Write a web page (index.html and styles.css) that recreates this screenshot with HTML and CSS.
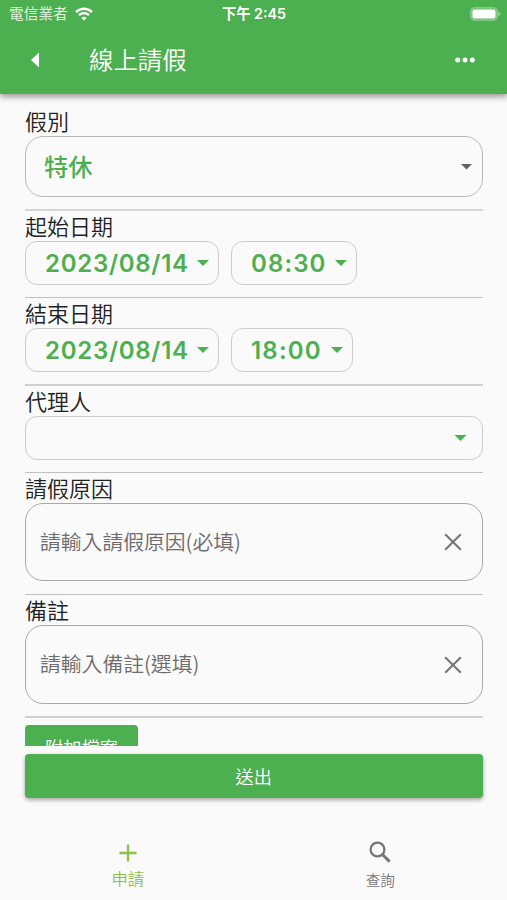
FILE: index.html
```html
<!DOCTYPE html>
<html lang="zh-Hant">
<head>
<meta charset="utf-8">
<title>線上請假</title>
<link rel="stylesheet" href="styles.css">
</head>
<body>
<div class="app">
  <header class="header">
    <div class="status">
      <div class="carrier">
        <span>電信業者</span>
        <svg width="18" height="14" viewBox="0 0 18 14" fill="none" stroke="#fff" stroke-width="2.4"><path d="M1 5.1C5.6.7 12.4.7 17 5.1"/><path d="M4 8.2c2.9-2.7 7.100-2.700 10 0"/><path d="M9 13.600L6.300 10.900c1.500-1.400 3.900-1.400 5.400 0z" fill="#fff" stroke="none"/></svg>
      </div>
      <div class="clock">下午 2:45</div>
      <svg class="battery" width="31" height="14" viewBox="0 0 31 14"><rect x=".75" y=".75" width="26.500" height="12.500" rx="4" fill="#6fc072" stroke="#94d096" stroke-width="1.200"/><rect x="2.500" y="2.500" width="23" height="9" rx="2" fill="#fff"/><path d="M28.500 4.800c2.400.7 2.400 3.700 0 4.400z" fill="#94d096"/></svg>
    </div>
    <div class="toolbar">
      <svg class="back" width="8" height="16" viewBox="0 0 8 16"><path d="M8 .5v15L0 8z" fill="#fff"/></svg>
      <h1>線上請假</h1>
      <svg class="more" width="20" height="6" viewBox="0 0 20 6" fill="#fff"><circle cx="2.700" cy="3" r="2.500"/><circle cx="10" cy="3" r="2.500"/><circle cx="17.300" cy="3" r="2.500"/></svg>
    </div>
  </header>

  <main class="form">
    <section class="field type">
      <label>假別</label>
      <div class="box large"><span class="cjk">特休</span><i class="caret dark"></i></div>
    </section>
    <section class="field">
      <label>起始日期</label>
      <div class="row">
        <div class="box date"><span>2023/08/14</span><i class="caret"></i></div>
        <div class="box start"><span>08:30</span><i class="caret"></i></div>
      </div>
    </section>
    <section class="field thick">
      <label>結束日期</label>
      <div class="row">
        <div class="box date"><span>2023/08/14</span><i class="caret"></i></div>
        <div class="box end"><span>18:00</span><i class="caret"></i></div>
      </div>
    </section>
    <section class="field">
      <label>代理人</label>
      <div class="box agent"><i class="caret"></i></div>
    </section>
    <section class="field reason">
      <label>請假原因</label>
      <div class="box input"><span>請輸入請假原因(必填)</span><svg width="18" height="18" viewBox="0 0 18 18"><path d="M1.200 1.200l15.600 15.600M16.800 1.200L1.200 16.800"/></svg></div>
    </section>
    <section class="field note">
      <label>備註</label>
      <div class="box input"><span>請輸入備註(選填)</span><svg width="18" height="18" viewBox="0 0 18 18"><path d="M1.200 1.200l15.600 15.600M16.800 1.200L1.200 16.800"/></svg></div>
    </section>
    <button class="attach">附加檔案</button>
  </main>

  <div class="actions"><button class="submit">送出</button></div>

  <nav class="tabs">
    <div class="tab active">
      <svg width="18" height="18" viewBox="0 0 18 18"><path d="M9 .5v17M.5 9h17" stroke="#8bc34a" stroke-width="2.300"/></svg>
      <span>申請</span>
    </div>
    <div class="tab">
      <svg width="22" height="22" viewBox="0 0 22 22" fill="none" stroke="#757575"><circle cx="8.500" cy="8.500" r="6.900" stroke-width="2.300"/><path d="M13.700 13.700l6.900 6.900" stroke-width="2.900"/></svg>
      <span>查詢</span>
    </div>
  </nav>
</div>
</body>
</html>
```
FILE: styles.css
```css
* { box-sizing: border-box; }

body {
  margin: 0;
  background: #fafafa;
  color: #222;
  font-family: Inter, "Noto Sans CJK TC", sans-serif;
}

svg { display: block; flex: none; }

button {
  border: 0;
  padding: 0;
  color: #fff;
  background: #4caf50;
  font: 350 18.2px/1 "Noto Sans CJK TC", sans-serif;
}

.app {
  display: flex;
  flex-direction: column;
  width: 507px;
  height: 900px;
  overflow: hidden;
}

.header {
  z-index: 1;
  flex: none;
  height: 94px;
  color: #fff;
  background: #4caf50;
  box-shadow: 0 3px 6px rgba(0, 0, 0, .38);
}

.status {
  display: grid;
  grid-template-columns: 1fr auto 1fr;
  align-items: center;
  height: 27px;
  padding: 0 8px 0 9px;
  font-size: 14.7px;
  line-height: 20px;
}

.carrier { display: flex; align-items: center; gap: 7px; color: #dff2df; }
.clock { font-size: 14.3px; font-weight: 600; white-space: nowrap; }
.battery { justify-self: end; margin-right: -2px; }

.toolbar {
  display: flex;
  align-items: center;
  height: 65px;
  padding: 0 32px 0 31px;
}

.toolbar h1 {
  margin: -2px 0 0 50px;
  font: 350 24.4px/36px "Noto Sans CJK TC", sans-serif;
}

.more { margin-left: auto; }

.form {
  flex: none;
  height: 652px;
  padding: 13px 24.5px 0 25px;
  overflow: hidden;
}

.field {
  padding-bottom: 12px;
  border-bottom: 1px solid #c0c0c0;
}

.field label {
  display: block;
  height: 30px;
  font: 350 22px/28px "Noto Sans CJK TC", sans-serif;
}

.type { border-bottom: 2px solid #d6d6d6; }
.type label { height: 29px; line-height: 27px; }
.thick, .note { border-bottom: 2px solid #d0d0d0; }
.reason { padding-bottom: 13px; }
.note .box { height: 79px; }

.row { display: flex; gap: 12px; }

.box {
  display: flex;
  align-items: center;
  justify-content: space-between;
  height: 44px;
  padding: 0 9px 0 19px;
  border: 1px solid #ccc;
  border-radius: 12px;
  color: #4caf50;
  font-size: 24px;
  font-weight: 600;
  line-height: 30px;
  white-space: nowrap;
}

.date { width: 194px; letter-spacing: .72px; }
.start { width: 126px; letter-spacing: 1.1px; }
.end { width: 122px; letter-spacing: 1.2px; }
.date span, .start span, .end span { padding-top: 1px; }
.agent { justify-content: flex-end; padding-right: 15px; }

.large {
  height: 61px;
  padding-right: 9px;
  border-color: #b8b8b8;
  border-radius: 18px;
}

.cjk {
  margin: -2px 0 0 -1px;
  font-family: "Noto Sans CJK TC", sans-serif;
  font-size: 24.3px;
  font-weight: 500;
}

.input {
  height: 78px;
  padding: 0 20px 0 14px;
  border-color: #a8a8a8;
  border-radius: 18px;
  color: #6c6c6c;
  font: 350 20.8px/30px "Noto Sans CJK TC", sans-serif;
}

.input span { margin-top: -3px; }
.input svg { stroke: #757575; stroke-width: 2; }

.caret {
  width: 12px;
  height: 6px;
  background: #4caf50;
  clip-path: polygon(0 0, 100% 0, 50% 100%);
}

.dark { background: #616161; }

.attach {
  display: block;
  width: 113px;
  height: 44px;
  margin-top: 7px;
  border-radius: 4px;
}

.actions { flex: none; padding: 8px 24.5px 0 25px; }

.submit {
  display: block;
  width: 100%;
  height: 44px;
  border-radius: 4px;
  box-shadow: 0 2px 4px rgba(0, 0, 0, .35);
}

.tabs {
  display: grid;
  grid-template-columns: 1fr 1fr;
  flex: 1;
  padding-top: 43px;
}

.tab {
  display: flex;
  flex-direction: column;
  align-items: center;
  gap: 6px;
  color: #757575;
  font: 350 14.6px/22px "Noto Sans CJK TC", sans-serif;
}

.active {
  gap: 5px;
  padding: 3px 0 0 2px;
  color: #8bc34a;
  font-size: 16.3px;
}
```
